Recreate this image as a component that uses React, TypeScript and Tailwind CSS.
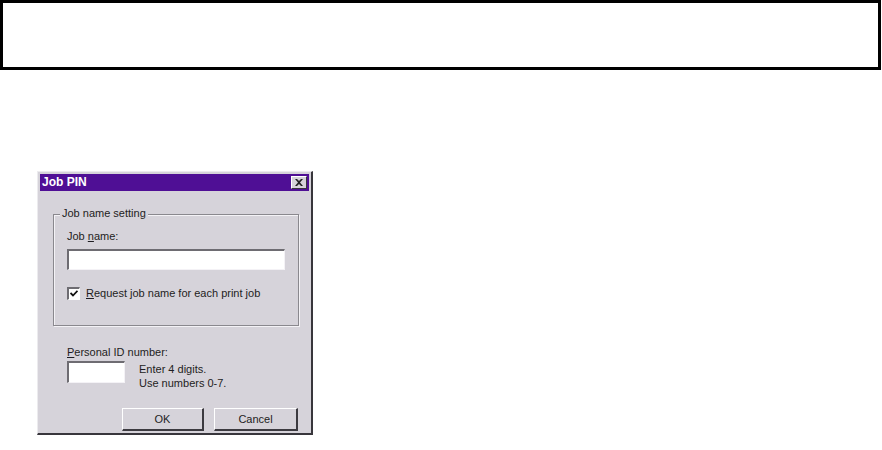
import React from "react";

function Field({ className }: { className: string }) {
  return (
    <div
      className={`bg-white border-t-2 border-l-2 border-t-[#6e6c72] border-l-[#6e6c72] border-b border-r border-b-[#f4f2f6] border-r-[#f4f2f6] ${className}`}
    />
  );
}

function Button({ label, className }: { label: string; className: string }) {
  return (
    <div
      className={`flex items-center justify-center h-[23px] bg-[#d6d3da] border-t border-l border-t-white border-l-white border-b-2 border-r-2 border-b-[#3c3a40] border-r-[#3c3a40] ${className}`}
    >
      {label}
    </div>
  );
}

export default function App() {
  return (
    <div className="w-[882px] h-[450px] bg-white overflow-hidden flex flex-col" style={{ fontFamily: '"Liberation Sans", Arial, sans-serif' }}>
      <div className="h-[70px] w-[881px] border-[3px] border-black shrink-0" />

      <div className="mt-[101px] ml-[37px] w-[276px] h-[264px] bg-[#d6d3da] border-t border-l border-t-[#ecebee] border-l-[#ecebee] border-b-2 border-r-2 border-b-[#38363c] border-r-[#38363c] p-[2px] flex flex-col text-[11px] text-[#1e1d22] leading-none">
        {/* title bar */}
        <div className="h-[17px] bg-[#4f0f95] flex items-center justify-between pl-[2px] pr-[2px]">
          <span className="text-white font-bold text-[12px]">Job PIN</span>
          <div className="w-[16px] h-[13px] bg-[#d6d3da] border-t border-l border-white border-b border-r border-b-[#38363c] border-r-[#38363c] flex items-center justify-center">
            <svg width="8" height="7" viewBox="0 0 8 7">
              <path d="M0 0 L2 0 L4 2 L6 0 L8 0 L5 3.5 L8 7 L6 7 L4 5 L2 7 L0 7 L3 3.5 Z" fill="#222" />
            </svg>
          </div>
        </div>

        {/* group box */}
        <div className="relative mt-[23px] ml-[13px] w-[246px] h-[114px] border border-[#8a888e] shadow-[1px_1px_0_#f4f2f6,inset_1px_1px_0_#f4f2f6]">
          <span className="absolute -top-[7px] left-[6px] px-[2px] bg-[#d6d3da]">Job name setting</span>
          <div className="pl-[13px] pt-[16px] flex flex-col">
            <span>
              Job <span className="underline">n</span>ame:
            </span>
            <Field className="mt-[7px] w-[218px] h-[21px]" />
            <div className="mt-[17px] flex items-center">
              <div className="w-[13px] h-[13px] bg-white border-t-2 border-l-2 border-t-[#6e6c72] border-l-[#6e6c72] border-b border-r border-b-white border-r-white flex items-center justify-center">
                <svg width="8" height="7" viewBox="0 0 8 7">
                  <path d="M0.5 3 L3 5.5 L7.5 0.8" stroke="#111" strokeWidth="1.8" fill="none" />
                </svg>
              </div>
              <span className="ml-[6px]">
                <span className="underline">R</span>equest job name for each print job
              </span>
            </div>
          </div>
        </div>

        {/* personal id */}
        <div className="ml-[27px] mt-[21px] flex flex-col">
          <span>
            <span className="underline">P</span>ersonal ID number:
          </span>
          <div className="mt-[3px] flex items-start">
            <Field className="w-[58px] h-[22px]" />
            <div className="ml-[14px] mt-[3px] flex flex-col gap-[3px]">
              <span>Enter 4 digits.</span>
              <span>Use numbers 0-7.</span>
            </div>
          </div>
        </div>

        <div className="mt-[19px] ml-[82px] flex gap-[10px]">
          <Button label="OK" className="w-[82px]" />
          <Button label="Cancel" className="w-[84px]" />
        </div>
      </div>
    </div>
  );
}
